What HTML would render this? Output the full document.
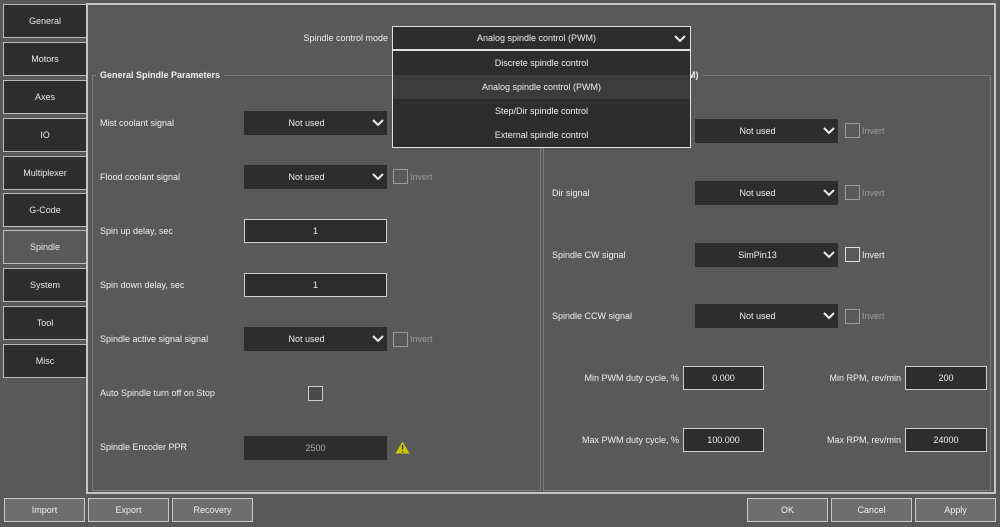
<!DOCTYPE html>
<html><head><meta charset="utf-8"><style>
*{box-sizing:border-box;margin:0;padding:0}
body{width:1000px;height:527px;background:#595959;font-family:"Liberation Sans",sans-serif;font-size:9px;color:#f0f0f0;position:relative;overflow:hidden}
.a{position:absolute}
.tab{position:absolute;left:3px;width:83px;height:34px;background:#2d2d2d;border:1px solid #bdbdbd;border-right:none;display:flex;align-items:center;justify-content:center;color:#e8e8e8}
.tab.sel{background:#595959}
.frame{position:absolute;left:86px;top:3px;width:910px;height:491px;border:2px solid #c4c4c4;border-right-width:2px}
.gb{position:absolute;border:1px solid #7a7a7a}
.gt{position:absolute;background:#595959;padding:0 4px;top:-6px;left:3px;font-weight:bold;color:#eee}
.lbl{position:absolute;display:flex;align-items:center;height:24px}
.cb{position:absolute;height:24px;background:#2d2d2d;display:flex;align-items:center;justify-content:center;padding-right:18px}
.cb svg{position:absolute;right:3px;top:8px}
.in{position:absolute;height:24px;background:#2d2d2d;border:1px solid #cfcfcf;display:flex;align-items:center;justify-content:center}
.chk{position:absolute;width:15px;height:15px;border:1px solid #9a9a9a;background:#595959}
.inv{position:absolute;color:#9a9a9a}
.btn{position:absolute;top:498px;height:24px;width:81px;background:#6e6e6e;border:1px solid #c8c8c8;display:flex;align-items:center;justify-content:center}
.dd{position:absolute;left:392px;width:299px;height:24px;display:flex;align-items:center;justify-content:center;background:#2d2d2d}
</style></head><body>
<div class="frame"></div>
<div class="tab" style="top:4px">General</div>
<div class="tab" style="top:42px">Motors</div>
<div class="tab" style="top:80px">Axes</div>
<div class="tab" style="top:118px">IO</div>
<div class="tab" style="top:156px">Multiplexer</div>
<div class="tab" style="top:193px">G-Code</div>
<div class="tab sel" style="top:230px">Spindle</div>
<div class="tab" style="top:268px">System</div>
<div class="tab" style="top:306px">Tool</div>
<div class="tab" style="top:344px">Misc</div>

<div class="gb" style="left:92px;top:75px;width:449px;height:416px"><div class="gt">General Spindle Parameters</div></div>
<div class="gb" style="left:543px;top:75px;width:448px;height:416px"><div class="gt">Analog Spindle Parameters (PWM)</div></div>

<div class="lbl" style="left:300px;top:26px;width:88px;justify-content:flex-end">Spindle control mode</div>

<!-- left -->
<div class="lbl" style="left:100px;top:111px">Mist coolant signal</div>
<div class="cb" style="left:244px;top:111px;width:143px">Not used<svg width="12" height="8"><path d="M1 1L6 6L11 1" stroke="#eee" stroke-width="2" fill="none"/></svg></div>
<div class="lbl" style="left:100px;top:165px">Flood coolant signal</div>
<div class="cb" style="left:244px;top:165px;width:143px">Not used<svg width="12" height="8"><path d="M1 1L6 6L11 1" stroke="#eee" stroke-width="2" fill="none"/></svg></div>
<div class="chk" style="left:393px;top:169px"></div><div class="lbl inv" style="left:410px;top:165px;color:#9a9a9a">Invert</div>
<div class="lbl" style="left:100px;top:219px">Spin up delay, sec</div>
<div class="in" style="left:244px;top:219px;width:143px">1</div>
<div class="lbl" style="left:100px;top:273px">Spin down delay, sec</div>
<div class="in" style="left:244px;top:273px;width:143px">1</div>
<div class="lbl" style="left:100px;top:327px">Spindle active signal signal</div>
<div class="cb" style="left:244px;top:327px;width:143px">Not used<svg width="12" height="8"><path d="M1 1L6 6L11 1" stroke="#eee" stroke-width="2" fill="none"/></svg></div>
<div class="chk" style="left:393px;top:332px"></div><div class="lbl inv" style="left:410px;top:327px;color:#9a9a9a">Invert</div>
<div class="lbl" style="left:100px;top:381px">Auto Spindle turn off on Stop</div>
<div class="chk" style="left:308px;top:386px;border-color:#ccc;background:#4a4a4a"></div>
<div class="lbl" style="left:100px;top:435px">Spindle Encoder PPR</div>
<div class="cb" style="left:244px;top:436px;width:143px;padding:0;color:#aaa">2500</div>
<svg class="a" style="left:395px;top:441px" width="15" height="13"><path d="M7.5 0.5L14.5 12.5H0.5Z" fill="#c8c800"/><path d="M7.5 4V8.5M7.5 10V11.2" stroke="#333" stroke-width="1.4"/></svg>

<!-- right -->
<div class="cb" style="left:695px;top:119px;width:143px">Not used<svg width="12" height="8"><path d="M1 1L6 6L11 1" stroke="#eee" stroke-width="2" fill="none"/></svg></div>
<div class="chk" style="left:845px;top:123px"></div><div class="lbl inv" style="left:862px;top:119px;color:#9a9a9a">Invert</div>
<div class="lbl" style="left:552px;top:181px">Dir signal</div>
<div class="cb" style="left:695px;top:181px;width:143px">Not used<svg width="12" height="8"><path d="M1 1L6 6L11 1" stroke="#eee" stroke-width="2" fill="none"/></svg></div>
<div class="chk" style="left:845px;top:185px"></div><div class="lbl inv" style="left:862px;top:181px;color:#9a9a9a">Invert</div>
<div class="lbl" style="left:552px;top:243px">Spindle CW signal</div>
<div class="cb" style="left:695px;top:243px;width:143px">SimPin13<svg width="12" height="8"><path d="M1 1L6 6L11 1" stroke="#eee" stroke-width="2" fill="none"/></svg></div>
<div class="chk" style="left:845px;top:247px;border-color:#ddd"></div><div class="lbl" style="left:862px;top:243px">Invert</div>
<div class="lbl" style="left:552px;top:304px">Spindle CCW signal</div>
<div class="cb" style="left:695px;top:304px;width:143px">Not used<svg width="12" height="8"><path d="M1 1L6 6L11 1" stroke="#eee" stroke-width="2" fill="none"/></svg></div>
<div class="chk" style="left:845px;top:309px"></div><div class="lbl inv" style="left:862px;top:304px;color:#9a9a9a">Invert</div>
<div class="lbl" style="left:560px;top:366px;width:119px;justify-content:flex-end">Min PWM duty cycle, %</div>
<div class="in" style="left:683px;top:366px;width:81px">0.000</div>
<div class="lbl" style="left:800px;top:366px;width:101px;justify-content:flex-end">Min RPM, rev/min</div>
<div class="in" style="left:905px;top:366px;width:82px">200</div>
<div class="lbl" style="left:560px;top:428px;width:119px;justify-content:flex-end">Max PWM duty cycle, %</div>
<div class="in" style="left:683px;top:428px;width:81px">100.000</div>
<div class="lbl" style="left:800px;top:428px;width:101px;justify-content:flex-end">Max RPM, rev/min</div>
<div class="in" style="left:905px;top:428px;width:82px">24000</div>

<!-- combo + dropdown -->
<div class="dd" style="top:26px;height:24px;border:1px solid #e0e0e0;padding-right:10px">Analog spindle control (PWM)<svg class="a" style="right:4px;top:8px" width="12" height="8"><path d="M1 1L6 6L11 1" stroke="#eee" stroke-width="2" fill="none"/></svg></div>
<div class="a" style="left:392px;top:50px;width:299px;height:98px;border:1px solid #e0e0e0;background:#2d2d2d">
<div style="height:24px;display:flex;align-items:center;justify-content:center">Discrete spindle control</div>
<div style="height:24px;display:flex;align-items:center;justify-content:center;background:#3c3c3c">Analog spindle control (PWM)</div>
<div style="height:24px;display:flex;align-items:center;justify-content:center">Step/Dir spindle control</div>
<div style="height:24px;display:flex;align-items:center;justify-content:center">External spindle control</div>
</div>

<div class="btn" style="left:4px">Import</div>
<div class="btn" style="left:88px">Export</div>
<div class="btn" style="left:172px">Recovery</div>
<div class="btn" style="left:747px">OK</div>
<div class="btn" style="left:831px">Cancel</div>
<div class="btn" style="left:915px">Apply</div>
</body></html>
